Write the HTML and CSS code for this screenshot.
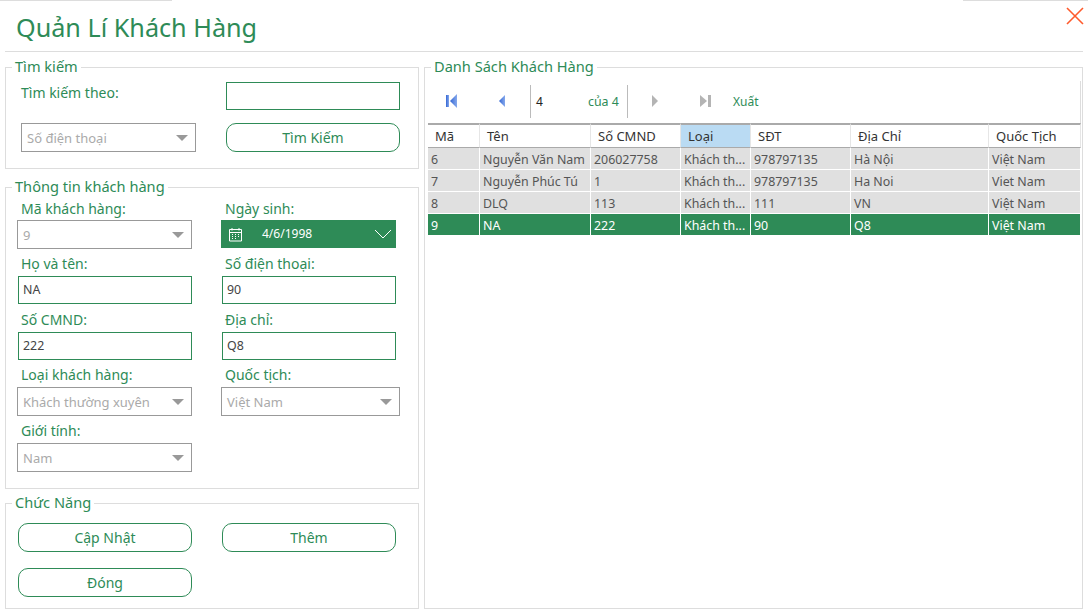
FILE: index.html
```html
<!DOCTYPE html>
<html>
<head>
	<title>Quản Lí Khách Hàng</title>
	<link rel="stylesheet" href="styles.css">
</head>
<body>
	<div class="top-strip"><span class="strip-left"></span><span class="strip-right"></span></div>
	<div class="header">
		<h1>Quản Lí Khách Hàng</h1>
		<svg class="close" width="18" height="18" viewBox="0 0 18 18"><path d="M1 1L17 17M17 1L1 17" stroke="#ff5a2b" stroke-width="1.6" fill="none"/></svg>
	</div>
	<div class="main">
		<div class="left">
			<fieldset class="box search-box">
				<legend>Tìm kiếm</legend>
				<div class="search-grid">
					<label class="search-label">Tìm kiếm theo:</label>
					<input class="text-input" type="text">
					<div class="combo"><span>Số điện thoại</span><i class="arrow"></i></div>
					<button class="round-btn">Tìm Kiếm</button>
				</div>
			</fieldset>
			<fieldset class="box info-box">
				<legend>Thông tin khách hàng</legend>
				<div class="info-grid">
					<div class="field first-row">
						<label>Mã khách hàng:</label>
						<div class="combo combo-form"><span>9</span><i class="arrow"></i></div>
					</div>
					<div class="field first-row">
						<label>Ngày sinh:</label>
						<div class="date-picker">
							<svg width="15" height="15" viewBox="0 0 15 15"><path d="M1.5 2.5H13.5V14H1.5ZM1.5 5.5H13.5" stroke="#fff" fill="none"/><path d="M4 1V3.5M11 1V3.5" stroke="#fff" fill="none"/><path d="M4 7h1v1H4zM7 7h1v1H7zM10 7h1v1h-1zM4 9h1v1H4zM7 9h1v1H7zM10 9h1v1h-1zM4 11h1v1H4zM7 11h1v1H7z" fill="#fff"/></svg>
							<span class="date-value">4/6/1998</span>
							<svg class="chevron" width="18" height="10" viewBox="0 0 18 10"><path d="M1 1L9 9L17 1" stroke="#fff" fill="none"/></svg>
						</div>
					</div>
					<div class="field">
						<label>Họ và tên:</label>
						<input class="text-input" type="text" value="NA">
					</div>
					<div class="field">
						<label>Số điện thoại:</label>
						<input class="text-input" type="text" value="90">
					</div>
					<div class="field">
						<label>Số CMND:</label>
						<input class="text-input" type="text" value="222">
					</div>
					<div class="field">
						<label>Địa chỉ:</label>
						<input class="text-input" type="text" value="Q8">
					</div>
					<div class="field">
						<label>Loại khách hàng:</label>
						<div class="combo combo-form"><span>Khách thường xuyên</span><i class="arrow"></i></div>
					</div>
					<div class="field">
						<label>Quốc tịch:</label>
						<div class="combo combo-form combo-wide"><span>Việt Nam</span><i class="arrow"></i></div>
					</div>
					<div class="field">
						<label>Giới tính:</label>
						<div class="combo combo-form"><span>Nam</span><i class="arrow"></i></div>
					</div>
				</div>
			</fieldset>
			<fieldset class="box action-box">
				<legend>Chức Năng</legend>
				<div class="action-grid">
					<button class="round-btn">Cập Nhật</button>
					<button class="round-btn">Thêm</button>
					<button class="round-btn">Đóng</button>
				</div>
			</fieldset>
		</div>
		<fieldset class="box list-box">
			<legend>Danh Sách Khách Hàng</legend>
			<div class="toolbar">
				<svg class="nav-first" width="12" height="14" viewBox="0 0 12 14"><defs><linearGradient id="navBlue"><stop offset="0" stop-color="#3466d4"/><stop offset="1" stop-color="#86a9ec"/></linearGradient></defs><rect x="0" y="1" width="3" height="12" fill="url(#navBlue)"/><path d="M11 0V14L4 7Z" fill="url(#navBlue)"/></svg>
				<svg class="nav-prev" width="8" height="14" viewBox="0 0 8 14"><path d="M7 1V13L1 7Z" fill="url(#navBlue)"/></svg>
				<span class="tool-sep"></span>
				<span class="page-num">4</span>
				<span class="page-of">của 4</span>
				<span class="tool-sep"></span>
				<svg class="nav-next" width="8" height="14" viewBox="0 0 8 14"><path d="M1 1V13L7 7Z" fill="#b4b4b4"/></svg>
				<svg class="nav-last" width="11" height="14" viewBox="0 0 11 14"><path d="M0 1V13L7 7Z" fill="#b4b4b4"/><rect x="8" y="1" width="3" height="12" fill="#b4b4b4"/></svg>
				<span class="export">Xuất</span>
			</div>
			<table class="grid">
				<thead>
					<tr>
						<th class="col-ma">Mã</th>
						<th class="col-ten">Tên</th>
						<th class="col-cmnd">Số CMND</th>
						<th class="col-loai sorted">Loại</th>
						<th class="col-sdt">SĐT</th>
						<th class="col-diachi">Địa Chỉ</th>
						<th class="col-qt">Quốc Tịch</th>
					</tr>
				</thead>
				<tbody>
					<tr><td>6</td><td>Nguyễn Văn Nam</td><td>206027758</td><td>Khách th...</td><td>978797135</td><td>Hà Nội</td><td>Việt Nam</td></tr>
					<tr><td>7</td><td>Nguyễn Phúc Tú</td><td>1</td><td>Khách th...</td><td>978797135</td><td>Ha Noi</td><td>Viet Nam</td></tr>
					<tr><td>8</td><td>DLQ</td><td>113</td><td>Khách th...</td><td>111</td><td>VN</td><td>Việt Nam</td></tr>
					<tr class="selected"><td>9</td><td>NA</td><td>222</td><td>Khách th...</td><td>90</td><td>Q8</td><td>Việt Nam</td></tr>
				</tbody>
			</table>
		</fieldset>
	</div>
</body>
</html>
```

FILE: styles.css
```css
* {
	box-sizing: border-box;
}
body {
	font-family: "Noto Sans", "Open Sans", sans-serif;
	font-size: 14px;
	background-color: #fff;
	color: #2e8b57;
	margin: 0;
	height: 615px;
	overflow: hidden;
}
.top-strip {
	display: flex;
	justify-content: space-between;
	height: 1px;
}
.strip-left {
	width: 172px;
	background-color: #ddd;
}
.strip-right {
	width: 125px;
	background-color: #ddd;
}
.header {
	display: flex;
	justify-content: space-between;
	height: 51px;
	margin: 0 5px;
	padding: 6px 0 0 11px;
	border-bottom: 1px solid #ddd;
}
h1 {
	margin: 0;
	font-size: 25.2px;
	font-weight: normal;
	line-height: 40px;
}
.close {
	margin: 0 -1px 0 0;
}
.main {
	display: grid;
	grid-template-columns: 414px 659px;
	column-gap: 5px;
	padding: 5px 0 0 5px;
}
.left {
	display: flex;
	flex-direction: column;
}
.box {
	margin: 0;
	padding: 0;
	min-width: 0;
	border: 1px solid #ddd;
}
.box legend {
	margin-left: 6px;
	padding: 0 3px 2px;
	font-size: 14.6px;
	line-height: 18px;
}
.search-box {
	height: 112px;
}
.info-box {
	height: 312px;
	margin-top: 8px;
}
.action-box {
	height: 116px;
	margin-top: 4px;
}
.list-box {
	height: 552px;
}
.search-grid {
	display: grid;
	grid-template-columns: 175px 174px;
	grid-template-rows: 28px 29px;
	column-gap: 30px;
	row-gap: 13px;
	padding: 5px 0 0 15px;
}
.search-label {
	line-height: 22px;
}
.info-grid {
	display: grid;
	grid-template-columns: 174px 174px;
	grid-template-rows: 56px 56px 55px 56px 56px;
	column-gap: 30px;
	padding: 2px 0 0 12px;
}
.field {
	display: flex;
	flex-direction: column;
}
.field label {
	height: 21px;
	padding-left: 3px;
	line-height: 17px;
}
.first-row label {
	padding-top: 1px;
}
.text-input {
	width: 174px;
	height: 28px;
	padding: 0 0 2px 4px;
	border: 1px solid #2e8b57;
	outline: none;
	font-family: inherit;
	font-size: 12.4px;
	color: #444;
	background-color: #fff;
}
.combo {
	display: flex;
	justify-content: space-between;
	align-items: center;
	height: 29px;
	padding: 1px 7px 0 5px;
	border: 1px solid #999;
	font-size: 13px;
	color: #aaa;
}
.combo-form {
	width: 175px;
	margin-left: -1px;
}
.combo-wide {
	width: 179px;
}
.arrow {
	width: 0;
	height: 0;
	border-left: 6px solid transparent;
	border-right: 6px solid transparent;
	border-top: 6px solid #999;
}
.date-picker {
	display: flex;
	align-items: center;
	width: 175px;
	height: 28px;
	margin-left: -1px;
	padding: 0 4px 0 7px;
	background-color: #2e8b57;
	color: #fff;
	font-size: 12px;
}
.date-value {
	margin: 0 0 2px 19px;
}
.chevron {
	margin-left: auto;
}
.round-btn {
	width: 174px;
	height: 29px;
	padding: 0;
	border: 1px solid #2e8b57;
	border-radius: 10px;
	background-color: #fff;
	color: #2e8b57;
	font-family: inherit;
	font-size: 14px;
}
.action-grid {
	display: grid;
	grid-template-columns: 174px 174px;
	column-gap: 30px;
	row-gap: 16px;
	padding: 10px 0 0 12px;
}
.toolbar {
	display: flex;
	align-items: center;
	height: 42px;
	margin: 4px 1px 0 0;
	padding: 0 0 2px 21px;
	border-right: 1px solid #ddd;
}
.nav-prev {
	margin-left: 40px;
}
.tool-sep {
	width: 1px;
	height: 33px;
	background-color: #bbb;
}
.nav-prev + .tool-sep {
	margin-left: 24px;
}
.page-num {
	width: 52px;
	margin-left: 5px;
	font-size: 12px;
	color: #222;
}
.page-of {
	width: 39px;
	font-size: 12.4px;
}
.nav-next {
	margin-left: 23px;
}
.nav-last {
	margin-left: 41px;
}
.export {
	margin-left: 22px;
	font-size: 12px;
}
.grid {
	width: 653px;
	margin: 0 0 0 3px;
	border-collapse: separate;
	border-spacing: 0;
	table-layout: fixed;
	font-size: 12.4px;
}
.grid th {
	height: 25px;
	padding: 0 0 0 7px;
	border-top: 2px solid #aaa;
	border-bottom: 1px solid #aaa;
	border-right: 1px solid #e6e6e6;
	font-size: 13px;
	font-weight: normal;
	text-align: left;
	color: #333;
}
.grid th.sorted {
	background-color: #badbf3;
}
.col-ma { width: 52px; }
.col-ten { width: 111px; }
.col-cmnd { width: 90px; }
.col-loai { width: 70px; }
.col-sdt { width: 100px; }
.col-diachi { width: 138px; }
.grid td {
	height: 22px;
	padding: 2px 0 0 3px;
	border-right: 1px solid #fff;
	border-bottom: 1px solid #fff;
	background-color: #e0e0e0;
	color: #555;
	white-space: nowrap;
	overflow: hidden;
}
.grid .selected td {
	background-color: #2e8b57;
	color: #fff;
}
```
